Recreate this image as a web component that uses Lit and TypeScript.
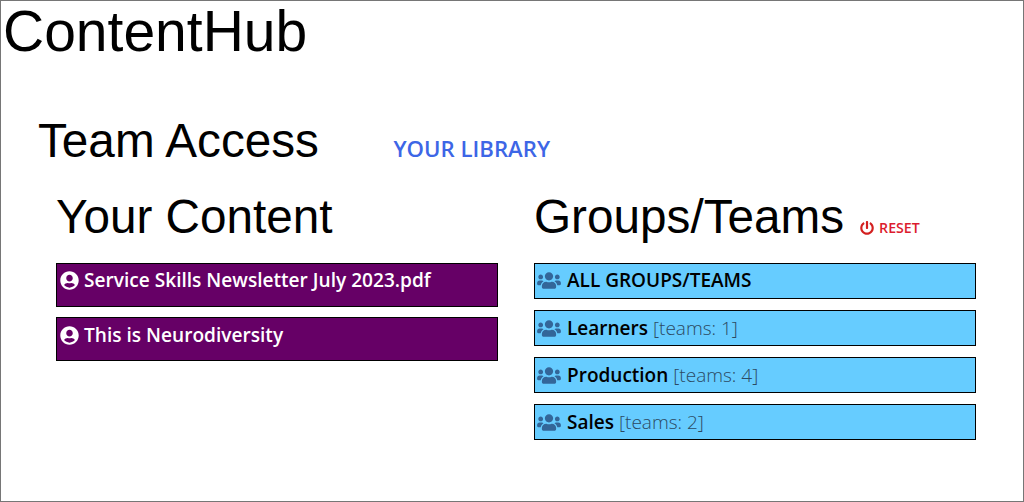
import { LitElement, html, css, svg } from "lit";
import { customElement } from "lit/decorators.js";

const userCircle = svg`<path d="M248 8C111 8 0 119 0 256s111 248 248 248 248-111 248-248S385 8 248 8zm0 96c48.6 0 88 39.4 88 88s-39.4 88-88 88-88-39.4-88-88 39.4-88 88-88zm0 344c-58.7 0-111.3-26.6-146.5-68.2 18.8-35.4 55.6-59.8 98.5-59.8 2.4 0 4.8.4 7.1 1.1 13 4.2 26.6 6.9 40.9 6.9 14.3 0 28-2.7 40.9-6.9 2.3-.7 4.7-1.1 7.1-1.1 42.9 0 79.7 24.4 98.5 59.8C359.3 421.4 306.7 448 248 448z"/>`;
const users = svg`<path d="M96 224c35.3 0 64-28.7 64-64s-28.7-64-64-64-64 28.7-64 64 28.7 64 64 64zm448 0c35.3 0 64-28.7 64-64s-28.7-64-64-64-64 28.7-64 64 28.7 64 64 64zm32 32h-64c-17.6 0-33.5 7.1-45.1 18.6 40.3 22.1 68.9 62 75.1 109.4h66c17.7 0 32-14.3 32-32v-32c0-35.3-28.7-64-64-64zm-256 0c61.9 0 112-50.1 112-112S381.9 32 320 32 208 82.1 208 144s50.1 112 112 112zm76.8 32h-8.3c-20.8 10-43.9 16-68.5 16s-47.6-6-68.5-16h-8.3C179.6 288 128 339.6 128 403.2V432c0 26.5 21.5 48 48 48h288c26.5 0 48-21.5 48-48v-28.8c0-63.6-51.6-115.2-115.2-115.2zm-223.7-13.4C161.5 263.1 145.6 256 128 256H64c-35.3 0-64 28.7-64 64v32c0 17.7 14.3 32 32 32h65.9c6.3-47.4 34.9-87.3 75.2-109.4z"/>`;
const power = svg`<path d="M400 54.1c63 45 104 118.6 104 201.9 0 136.8-110.8 247.7-247.5 248C120 504.3 8.2 393 8 256.4 7.9 173.1 48.9 99.3 111.8 54.2c11.7-8.3 28-4.8 35 7.7L162.6 90c5.9 10.5 3.1 23.8-6.6 31-41.5 30.8-68 79.6-68 134.9-.1 92.3 74.5 168.1 168 168.1 91.6 0 168.6-74.2 168-169.1-.3-51.8-24.7-101.8-68.1-134-9.7-7.2-12.4-20.5-6.4-30.9l15.8-28.1c7-12.4 23.2-16.1 34.8-7.8zM296 264V24c0-13.3-10.7-24-24-24h-32c-13.3 0-24 10.7-24 24v240c0 13.3 10.7 24 24 24h32c13.3 0 24-10.7 24-24z"/>`;

const content = ["Service Skills Newsletter July 2023.pdf", "This is Neurodiversity"];
const groups = [
  { name: "ALL GROUPS/TEAMS", meta: "" },
  { name: "Learners", meta: "[teams: 1]" },
  { name: "Production", meta: "[teams: 4]" },
  { name: "Sales", meta: "[teams: 2]" },
];

@customElement("app-root")
export class AppRoot extends LitElement {
  static styles = css`
    :host {
      display: block;
      box-sizing: border-box;
      height: 502px;
      border: 1px solid #767676;
      background: #fff;
      color: #000;
      font-family: "Liberation Sans", Arial, sans-serif;
      overflow: hidden;
    }
    h1, h2, h3 { margin: 0; font-weight: 400; }
    .brand { font-size: 57px; line-height: 60px; padding-left: 2px; }
    .team-head {
      display: flex;
      align-items: baseline;
      margin-top: 52px;
      padding-left: 37px;
    }
    .team-head h2 { font-size: 47.7px; line-height: 55px; }
    .library {
      margin-left: 74.5px;
      font: 600 22.2px/28px "Open Sans", sans-serif;
      color: #3d66e6;
    }
    .cols {
      display: grid;
      grid-template-columns: 442px 442px;
      column-gap: 36px;
      margin-top: 24px;
      padding-left: 55px;
    }
    .col-head { display: flex; align-items: baseline; height: 50px; margin-bottom: 21px; }
    .col-head h3 { font-size: 47.7px; line-height: 50px; }
    .reset {
      display: inline-flex;
      align-items: center;
      align-self: flex-end;
      gap: 5px;
      margin: 0 0 5px 16px;
      font: 600 14.2px/18px "Open Sans", sans-serif;
      color: #dc1c2e;
    }
    .reset svg { width: 14px; height: 14px; fill: #d32020; }
    .list { display: flex; flex-direction: column; }
    .item {
      box-sizing: border-box;
      border: 1px solid #000;
      display: flex;
      align-items: flex-start;
      font: 600 19px/24px "Open Sans", sans-serif;
    }
    .content-item {
      height: 44px;
      margin-bottom: 10.4px;
      padding: 4.2px 3px;
      background: #660066;
      color: #fff;
      gap: 5px;
      font-size: 19.1px;
    }
    .content-item svg { width: 19px; height: 19px; fill: #fff; margin-top: 3px; flex: none; }
    .group-item {
      height: 35.65px;
      margin-bottom: 11.5px;
      padding: 4.4px 2px;
      background: #66ccff;
      color: #000;
      gap: 6px;
    }
    .group-item svg { width: 24px; height: 19px; fill: #336699; margin-top: 3px; flex: none; }
    .meta { font-weight: 300; color: #2c4a63; margin-left: 5px; }
  `;

  render() {
    return html`
      <h1 class="brand">ContentHub</h1>
      <div class="team-head">
        <h2>Team Access</h2>
        <span class="library">YOUR LIBRARY</span>
      </div>
      <div class="cols">
        <section>
          <div class="col-head"><h3>Your Content</h3></div>
          <div class="list">
            ${content.map(
              (c) => html`<div class="item content-item">
                <svg viewBox="0 0 496 512">${userCircle}</svg><span>${c}</span>
              </div>`
            )}
          </div>
        </section>
        <section>
          <div class="col-head">
            <h3>Groups/Teams</h3>
            <span class="reset"><svg viewBox="0 0 512 512">${power}</svg>RESET</span>
          </div>
          <div class="list">
            ${groups.map(
              (g) => html`<div class="item group-item">
                <svg viewBox="0 0 640 512">${users}</svg>
                <span>${g.name}${g.meta ? html`<span class="meta">${g.meta}</span>` : ""}</span>
              </div>`
            )}
          </div>
        </section>
      </div>
    `;
  }
}
